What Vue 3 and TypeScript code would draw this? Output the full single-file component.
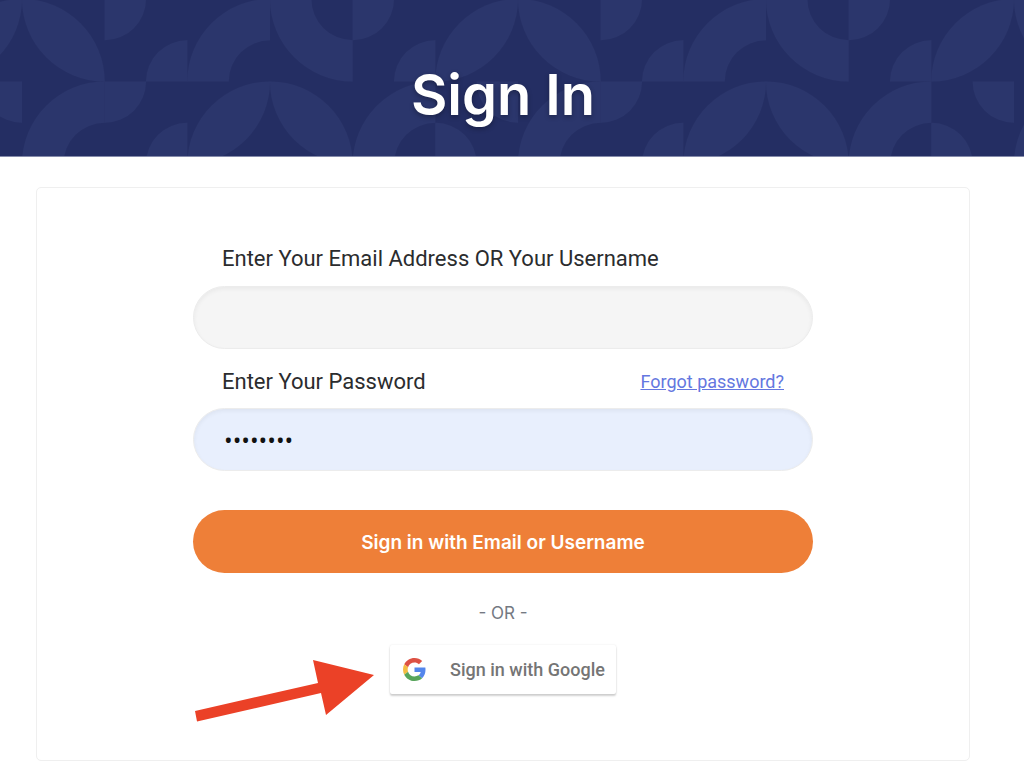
<script setup lang="ts">
import { ref } from 'vue'

const username = ref('')
const password = ref('hunter22')

type Shape = 'leafDown' | 'leafUp' | 'ringBR' | 'ringTR' | 'dots' | 'dotsFlipped'

// Every shape fills a 2x2 cell of the header pattern.
const shapes: Record<Shape, string> = {
  leafDown: 'M0 0A2 2 0 0 1 2 2A2 2 0 0 1 0 0Z',
  leafUp: 'M0 2A2 2 0 0 1 2 0A2 2 0 0 1 0 2Z',
  ringBR: 'M0 2A2 2 0 0 1 2 0V1A1 1 0 0 0 1 2Z',
  ringTR: 'M0 0A2 2 0 0 0 2 2V1A1 1 0 0 1 1 0Z',
  dots: 'M0 0H1A1 1 0 0 1 0 1ZM2 2H1A1 1 0 0 1 2 1Z',
  dotsFlipped: 'M2 0H1A1 1 0 0 0 2 1ZM0 2H1A1 1 0 0 0 0 1Z',
}

const rows: Shape[][] = [
  ['leafDown', 'dots', 'ringBR', 'ringTR', 'dots', 'leafUp'],
  ['ringBR', 'dots', 'leafUp', 'leafDown', 'ringBR', 'dotsFlipped'],
]

const tiles = rows.flatMap((row, r) =>
  row.map((name, c) => ({ d: shapes[name], move: `translate(${c * 2} ${r * 2})` })),
)
</script>

<template>
  <div class="page">
    <header class="banner">
      <svg class="banner-pattern" aria-hidden="true">
        <defs>
          <pattern
            id="tiles"
            x="22"
            y="-1"
            width="496"
            height="165"
            patternUnits="userSpaceOnUse"
            viewBox="0 0 12 4"
            preserveAspectRatio="none"
          >
            <path v-for="(tile, i) in tiles" :key="i" :d="tile.d" :transform="tile.move" fill="#2b366c" />
          </pattern>
        </defs>
        <rect width="100%" height="100%" fill="url(#tiles)" />
      </svg>
      <h1 class="title">Sign In</h1>
    </header>

    <main class="main">
      <section class="card">
        <form class="form" @submit.prevent>
          <div class="label-row">
            <label for="username">Enter Your Email Address OR Your Username</label>
          </div>
          <input id="username" v-model="username" class="field" type="text" autocomplete="off" />

          <div class="label-row second">
            <label for="password">Enter Your Password</label>
            <a class="forgot" href="#">Forgot password?</a>
          </div>
          <input id="password" v-model="password" class="field filled" type="password" autocomplete="off" />

          <button class="submit" type="submit">Sign in with Email or Username</button>

          <p class="or">- OR -</p>

          <div class="google-wrap">
            <button class="google" type="button">
              <svg class="google-logo" viewBox="0 0 48 48" aria-hidden="true">
                <path fill="#dd5144" d="M24 9.5c3.54 0 6.71 1.22 9.21 3.6l6.85-6.85C35.9 2.38 30.47 0 24 0 14.62 0 6.51 5.38 2.56 13.22l7.98 6.19C12.43 13.72 17.74 9.5 24 9.5z" />
                <path fill="#5486ec" d="M46.98 24.55c0-1.57-.15-3.09-.38-4.55H24v9.02h12.94c-.58 2.96-2.26 5.48-4.78 7.18l7.73 6c4.51-4.18 7.09-10.36 7.09-17.65z" />
                <path fill="#f3bd42" d="M10.53 28.59c-.48-1.45-.76-2.99-.76-4.59s.27-3.14.76-4.59l-7.98-6.19C.92 16.46 0 20.12 0 24c0 3.88.92 7.54 2.56 10.78l7.97-6.19z" />
                <path fill="#58a55c" d="M24 48c6.48 0 11.93-2.13 15.89-5.81l-7.73-6c-2.15 1.45-4.92 2.3-8.16 2.3-6.26 0-11.57-4.22-13.47-9.91l-7.98 6.19C6.51 42.62 14.62 48 24 48z" />
              </svg>
              <span>Sign in with Google</span>
            </button>
            <svg class="arrow" viewBox="0 0 181 63" aria-hidden="true">
              <path fill="#eb4127" d="M1 52L124 24L119 1L180 16L132 56L127 34L3 62.500Z" />
            </svg>
          </div>
        </form>
      </section>
    </main>
  </div>
</template>

<style>
body {
  margin: 0;
  background: #fff;
}
</style>

<style scoped>
.page {
  font-family: Inter, 'Liberation Sans', sans-serif;
  color: #2b2c2e;
}

.banner {
  position: relative;
  box-sizing: border-box;
  padding: 59px 18px 25px 0;
  background: #242e63;
  border-bottom: 1px solid #858bab;
}

.banner-pattern {
  position: absolute;
  inset: 0;
  width: 100%;
  height: 100%;
}

.title {
  position: relative;
  margin: 0;
  font-size: 56px;
  line-height: 72px;
  font-weight: 600;
  text-align: center;
  color: #fff;
  text-shadow: 0 2px 5px rgba(0, 0, 0, 0.3);
}

.main {
  padding: 30px 54px 14px 36px;
}

.card {
  padding: 57px 24px 66px;
  border: 1px solid #efefef;
  border-radius: 5px;
}

.form {
  display: flex;
  flex-direction: column;
  max-width: 620px;
  margin: 0 auto;
}

.label-row {
  display: flex;
  justify-content: space-between;
  align-items: center;
  margin-bottom: 13px;
  padding: 0 29px;
  font-family: Roboto, 'Liberation Sans', sans-serif;
  font-size: 22px;
  line-height: 28px;
}

.second {
  margin-top: 19px;
  margin-bottom: 12px;
}

.forgot {
  font-size: 18px;
  color: #6477e0;
  text-decoration: underline;
}

.field {
  box-sizing: border-box;
  width: 100%;
  height: 63px;
  padding: 0 30px;
  border: 1px solid #ececec;
  border-radius: 32px;
  background: #f5f5f5;
  box-shadow: inset 0 2px 4px rgba(0, 0, 0, 0.05);
  font-family: 'Open Sans', sans-serif;
  font-size: 23px;
  color: #111;
  outline: none;
}

.filled {
  background: #e8effd;
}

.submit {
  height: 63px;
  margin-top: 39px;
  padding: 2px 0 0;
  border: 0;
  border-radius: 32px;
  background: #ee7f38;
  font-family: inherit;
  font-size: 19px;
  font-weight: 600;
  color: #fff;
  cursor: pointer;
}

.or {
  margin: 28px 0 20px;
  font-size: 17px;
  line-height: 24px;
  text-align: center;
  color: #747982;
}

.google-wrap {
  position: relative;
  align-self: center;
}

.google {
  display: flex;
  align-items: center;
  gap: 24px;
  height: 49px;
  padding: 0 11px 0 13px;
  border: 0;
  border-radius: 2px;
  background: #fff;
  box-shadow: 0 2px 2px rgba(0, 0, 0, 0.18), 0 0 2px rgba(0, 0, 0, 0.1);
  font-family: Roboto, sans-serif;
  font-size: 18px;
  font-weight: 500;
  color: #757575;
  cursor: pointer;
}

.google-logo {
  width: 23px;
  height: 23px;
}

.arrow {
  position: absolute;
  top: 14px;
  right: 100%;
  width: 181px;
  height: 63px;
  margin-right: 15px;
  pointer-events: none;
}
</style>
